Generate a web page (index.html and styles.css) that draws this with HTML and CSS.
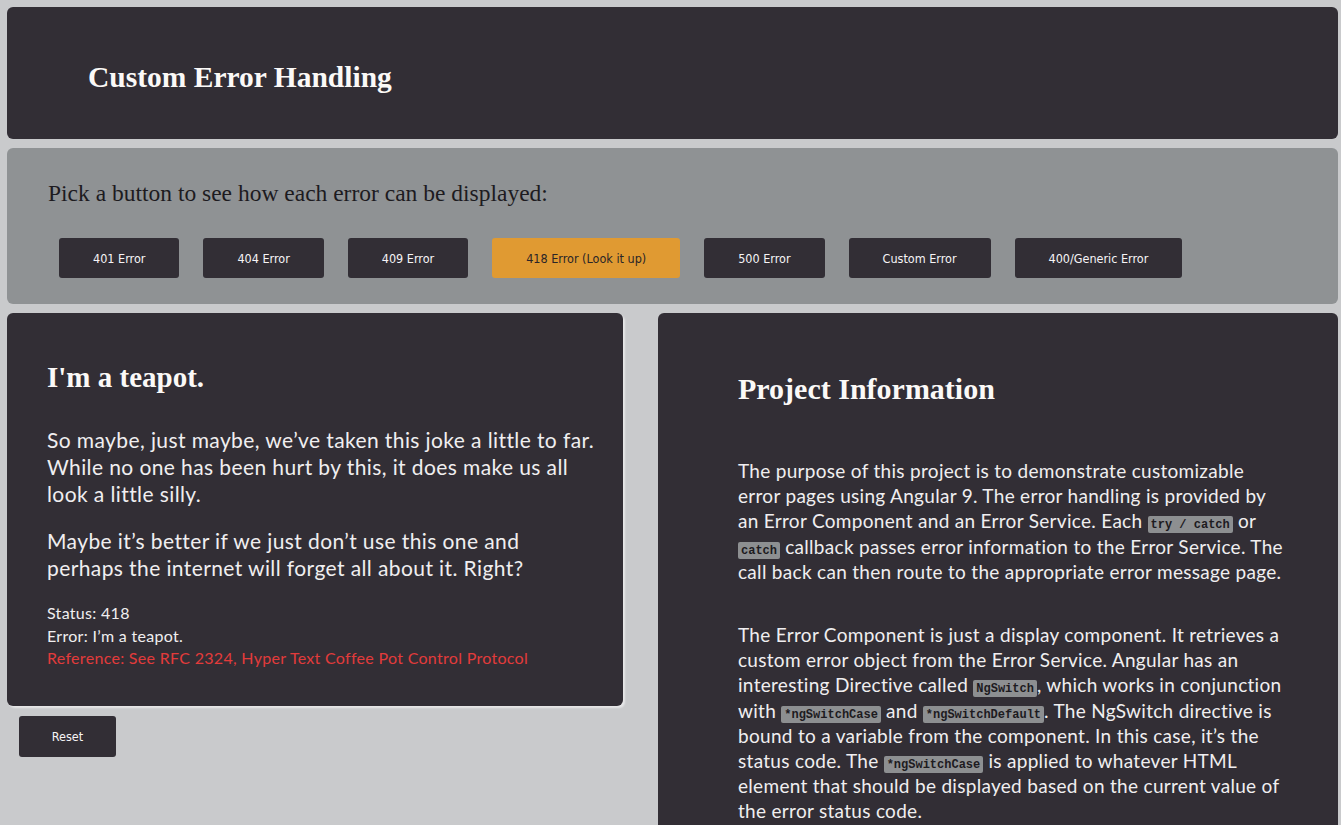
FILE: index.html
```html
<!DOCTYPE html>
<html lang="en">
<head>
<meta charset="utf-8">
<title>Custom Error Handling</title>
<link rel="stylesheet" href="styles.css">
</head>
<body>
<header class="banner">
  <h1 class="banner-title">Custom Error Handling</h1>
</header>

<section class="picker">
  <p class="picker-label">Pick a button to see how each error can be displayed:</p>
  <div class="picker-buttons">
    <button class="btn">401 Error</button>
    <button class="btn">404 Error</button>
    <button class="btn">409 Error</button>
    <button class="btn btn-active">418 Error (Look it up)</button>
    <button class="btn">500 Error</button>
    <button class="btn">Custom Error</button>
    <button class="btn">400/Generic Error</button>
  </div>
</section>

<main class="content">
  <div class="left-col">
    <article class="card error-card">
      <h2 class="card-title">I'm a teapot.</h2>
      <p class="lead">So maybe, just maybe, we’ve taken this joke a little to far. While no one has been hurt by this, it does make us all look a little silly.</p>
      <p class="lead">Maybe it’s better if we just don’t use this one and perhaps the internet will forget all about it. Right?</p>
      <div class="details">
        <div>Status: 418</div>
        <div>Error: I’m a teapot.</div>
        <div class="ref">Reference: See RFC 2324, Hyper Text Coffee Pot Control Protocol</div>
      </div>
    </article>
    <button class="btn btn-reset">Reset</button>
  </div>

  <article class="card info-card">
    <h2 class="card-title info-title">Project Information</h2>
    <p class="info-text">The purpose of this project is to demonstrate customizable error pages using Angular 9. The error handling is provided by an Error Component and an Error Service. Each <code>try / catch</code> or <code>catch</code> callback passes error information to the Error Service. The call back can then route to the appropriate error message page.</p>
    <p class="info-text">The Error Component is just a display component. It retrieves a custom error object from the Error Service. Angular has an interesting Directive called <code>NgSwitch</code>, which works in conjunction with <code>*ngSwitchCase</code> and <code>*ngSwitchDefault</code>. The NgSwitch directive is bound to a variable from the component. In this case, it’s the status code. The <code>*ngSwitchCase</code> is applied to whatever HTML element that should be displayed based on the current value of the error status code.</p>
  </article>
</main>
</body>
</html>
```

FILE: styles.css
```css
* { box-sizing: border-box; }

html, body {
  margin: 0;
  padding: 0;
  height: 100%;
  overflow: hidden;
}

body {
  background: #c9cacc;
  padding: 7px 3px 0 7px;
  font-family: Lato, "Liberation Sans", sans-serif;
  color: #f0eef0;
}

.banner {
  background: #322e35;
  border-radius: 6px;
  height: 132px;
  display: flex;
  align-items: center;
  padding: 8px 0 0 81px;
}

.banner-title {
  margin: 0;
  font-family: "Liberation Serif", serif;
  font-weight: bold;
  font-size: 29.5px;
  color: #fbf9f7;
}

.picker {
  background: #8f9294;
  border-radius: 6px;
  margin-top: 9px;
  height: 156px;
  padding: 30px 0 0 41px;
}

.picker-label {
  margin: 0;
  font-family: "Liberation Serif", serif;
  font-size: 23.5px;
  color: #1d1b1f;
  line-height: 30px;
}

.picker-buttons {
  display: flex;
  gap: 24px;
  margin-top: 30px;
  padding-left: 11px;
}

.btn {
  background: #322e35;
  color: #f6f4f6;
  border: none;
  border-radius: 3px;
  height: 40px;
  padding: 0 34px;
  font-family: "DejaVu Sans Condensed", "Liberation Sans", sans-serif;
  font-size: 12.5px;
  cursor: pointer;
}

.btn-active {
  background: #e09a32;
  color: #2a2528;
}

.content {
  display: flex;
  gap: 35px;
  margin-top: 9px;
  align-items: flex-start;
}

.left-col {
  width: 616px;
  flex: none;
}

.card {
  background: #322e35;
  border-radius: 6px;
}

.error-card {
  padding: 46px 22px 36px 40px;
  box-shadow: 2px 2px 2px rgba(255,255,255,0.55);
}

.card-title {
  margin: 0;
  font-family: "Liberation Serif", serif;
  font-weight: bold;
  font-size: 29px;
  color: #fbf9f7;
  line-height: 36px;
}

.lead {
  margin: 31px 0 0;
  font-size: 21px;
  letter-spacing: 0.4px;
  line-height: 27px;
}

.lead + .lead {
  margin-top: 20px;
}

.details {
  margin-top: 21px;
  font-size: 16px;
  letter-spacing: 0.3px;
  line-height: 22.5px;
}

.ref {
  color: #e23b3b;
}

.btn-reset {
  margin: 10px 0 0 12px;
  width: 97px;
  height: 41px;
  padding: 0;
}

.info-card {
  flex: 1;
  height: 560px;
  padding: 58px 48px 0 80px;
  border-radius: 6px 6px 0 0;
}

.info-title {
  font-size: 30px;
}

.info-text {
  margin: 51px 0 0;
  font-size: 19px;
  letter-spacing: 0.3px;
  line-height: 25.2px;
}

.info-text + .info-text {
  margin-top: 38px;
}

code {
  background: #8d8f91;
  color: #1d1b1f;
  font-family: "Liberation Mono", monospace;
  font-size: 12px;
  font-weight: bold;
  letter-spacing: 0;
  line-height: 1;
  padding: 2px 3px 1px;
  border-radius: 2px;
}
```
